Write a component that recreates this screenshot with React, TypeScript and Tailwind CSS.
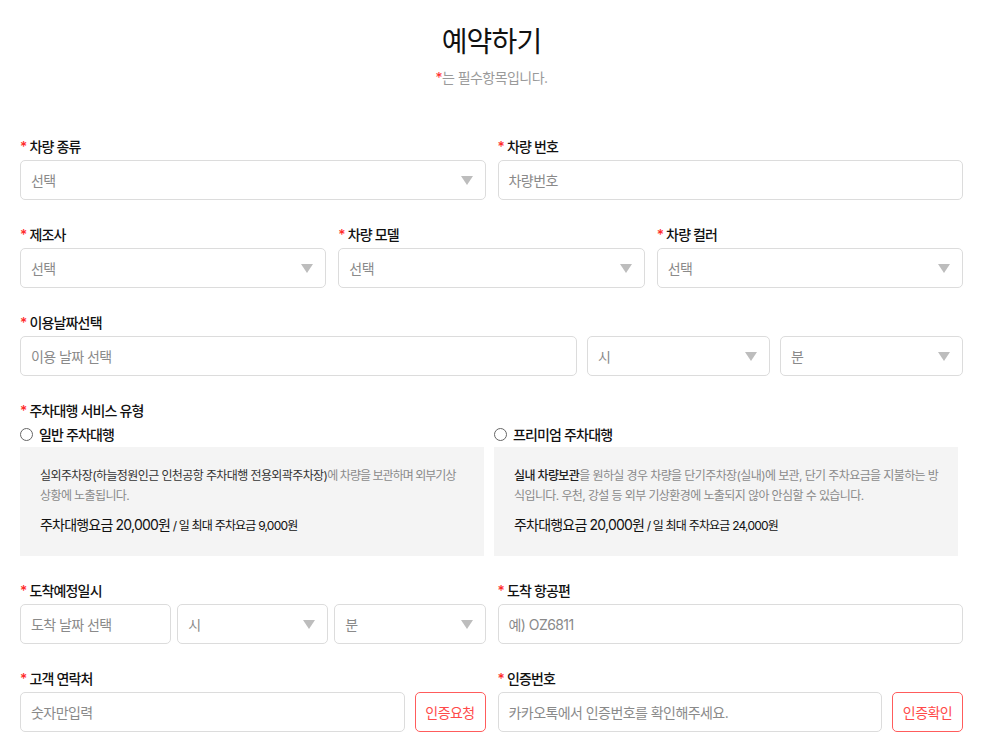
import React from "react";

const Star = () => <span className="text-[#ff2a2a] mr-[3px]">*</span>;

function Label({ children }: { children: React.ReactNode }) {
  return (
    <div className="h-5 mb-1 flex items-center text-[14px] font-medium text-[#111] tracking-[-0.06em]">
      <Star />
      {children}
    </div>
  );
}

function Arrow() {
  return (
    <svg width="12" height="9" viewBox="0 0 12 9" className="shrink-0">
      <path d="M0 0 H12 L6 9 Z" fill="#bdbdbd" />
    </svg>
  );
}

function Select({ text }: { text: string }) {
  return (
    <div className="h-10 border border-[#dcdcdc] rounded-[5px] flex items-center justify-between pl-[10px] pr-[12px] bg-white">
      <span className="text-[14px] text-[#8a8a8a] tracking-[-0.04em]">{text}</span>
      <Arrow />
    </div>
  );
}

function Input({ text }: { text: string }) {
  return (
    <div className="h-10 border border-[#dcdcdc] rounded-[5px] flex items-center pl-[10px] bg-white min-w-0">
      <span className="text-[14px] text-[#8a8a8a] tracking-[-0.04em] whitespace-nowrap">{text}</span>
    </div>
  );
}

function RedButton({ text }: { text: string }) {
  return (
    <div className="h-10 w-[71px] shrink-0 border border-[#ff5c5c] rounded-[5px] flex items-center justify-center text-[14px] text-[#ff4a4a] tracking-[-0.04em]">
      {text}
    </div>
  );
}

function Radio({ text }: { text: string }) {
  return (
    <div className="h-5 flex items-center gap-[6px] text-[14px] font-medium text-[#111] tracking-[-0.06em]">
      <span className="w-[13px] h-[13px] rounded-full border border-[#666] bg-white" />
      {text}
    </div>
  );
}

export default function App() {
  return (
    <div
      className="bg-white min-h-screen w-full"
      style={{ fontFamily: 'Inter, "Noto Sans CJK KR", sans-serif' }}
    >
      <div className="ml-[20px] w-[943px] pb-10">
        <div className="pt-[22px] text-center">
          <h1 className="text-[28px] leading-[40px] font-normal text-[#111] tracking-[-0.03em]">예약하기</h1>
          <p className="mt-[6px] text-[14px] leading-[20px] text-[#9a9a9a] tracking-[-0.04em]">
            <span className="text-[#ff2a2a]">*</span>는 필수항목입니다.
          </p>
        </div>

        <div className="mt-[48px] grid grid-cols-2 gap-x-3">
          <div>
            <Label>차량 종류</Label>
            <Select text="선택" />
          </div>
          <div>
            <Label>차량 번호</Label>
            <Input text="차량번호" />
          </div>
        </div>

        <div className="mt-6 grid grid-cols-3 gap-x-3">
          <div>
            <Label>제조사</Label>
            <Select text="선택" />
          </div>
          <div>
            <Label>차량 모델</Label>
            <Select text="선택" />
          </div>
          <div>
            <Label>차량 컬러</Label>
            <Select text="선택" />
          </div>
        </div>

        <div className="mt-6">
          <Label>이용날짜선택</Label>
          <div className="grid grid-cols-[557fr_183fr_183fr] gap-x-[10px]">
            <Input text="이용 날짜 선택" />
            <Select text="시" />
            <Select text="분" />
          </div>
        </div>

        <div className="mt-6">
          <Label>주차대행 서비스 유형</Label>
          <div className="w-[938px] grid grid-cols-2 gap-x-[10px]">
            <div>
              <Radio text="일반 주차대행" />
              <div className="mt-[3px] h-[109px] bg-[#f4f4f4] px-5 pt-[19px]">
                <p className="text-[12px] leading-[20px] text-[#8a8a8a] whitespace-nowrap">
                  <span className="text-[#333] tracking-[-0.05em]">실외주차장(하늘정원인근 인천공항 주차대행 전용외곽주차장)</span>
                  <span className="tracking-[-0.08em]">에 차량을 보관하며 외부기상</span>
                  <br />
                  <span className="tracking-[-0.05em]">상황에 노출됩니다.</span>
                </p>
                <p className="mt-[6px] text-[#111] tracking-[-0.05em]">
                  <span className="text-[14px]">주차대행요금 20,000원</span>
                  <span className="text-[12px]"> / 일 최대 주차요금 9,000원</span>
                </p>
              </div>
            </div>
            <div>
              <Radio text="프리미엄 주차대행" />
              <div className="mt-[3px] h-[109px] bg-[#f4f4f4] px-5 pt-[19px]">
                <p className="text-[12px] leading-[20px] text-[#8a8a8a] tracking-[-0.05em] whitespace-nowrap">
                  <span className="text-[#222] font-medium">실내 차량보관</span>을 원하실 경우 차량을 단기주차장(실내)에 보관, 단기 주차요금을 지불하는 방
                  <br />
                  식입니다. 우천, 강설 등 외부 기상환경에 노출되지 않아 안심할 수 있습니다.
                </p>
                <p className="mt-[6px] text-[#111] tracking-[-0.05em]">
                  <span className="text-[14px]">주차대행요금 20,000원</span>
                  <span className="text-[12px]"> / 일 최대 주차요금 24,000원</span>
                </p>
              </div>
            </div>
          </div>
        </div>

        <div className="mt-6 grid grid-cols-2 gap-x-3">
          <div>
            <Label>도착예정일시</Label>
            <div className="grid grid-cols-3 gap-x-[6px]">
              <Input text="도착 날짜 선택" />
              <Select text="시" />
              <Select text="분" />
            </div>
          </div>
          <div>
            <Label>도착 항공편</Label>
            <Input text="예) OZ6811" />
          </div>
        </div>

        <div className="mt-6 grid grid-cols-2 gap-x-3">
          <div>
            <Label>고객 연락처</Label>
            <div className="flex gap-[10px]">
              <div className="flex-1 min-w-0">
                <Input text="숫자만입력" />
              </div>
              <RedButton text="인증요청" />
            </div>
          </div>
          <div>
            <Label>인증번호</Label>
            <div className="flex gap-[10px]">
              <div className="flex-1 min-w-0">
                <Input text="카카오톡에서 인증번호를 확인해주세요." />
              </div>
              <RedButton text="인증확인" />
            </div>
          </div>
        </div>
      </div>
    </div>
  );
}
